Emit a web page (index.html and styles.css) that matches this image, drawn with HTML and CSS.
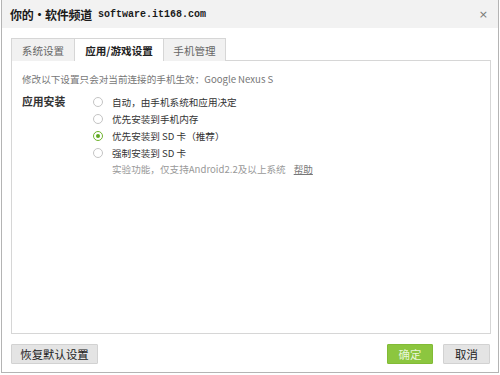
FILE: index.html
```html
<!DOCTYPE html>
<html lang="zh-CN">
<head>
<meta charset="utf-8">
<link rel="stylesheet" href="styles.css">
</head>
<body>
<div class="window">
  <div class="titlebar">
    <span class="wm-cn">你的·软件频道</span>
    <span class="wm-en">software.it168.com</span>
    <span class="close">×</span>
  </div>
  <div class="tabs">
    <div class="tab t1">系统设置</div>
    <div class="tab t2 active">应用/游戏设置</div>
    <div class="tab t3">手机管理</div>
  </div>
  <div class="panel">
    <div class="info">修改以下设置只会对当前连接的手机生效：Google Nexus S</div>
    <div class="setting">
      <div class="setting-label">应用安装</div>
      <div class="options">
        <div class="option"><span class="radio"></span>自动，由手机系统和应用决定</div>
        <div class="option"><span class="radio"></span>优先安装到手机内存</div>
        <div class="option"><span class="radio checked"></span>优先安装到 SD 卡（推荐）</div>
        <div class="option"><span class="radio"></span>强制安装到 SD 卡</div>
        <div class="note">实验功能，仅支持Android2.2及以上系统<a class="help">帮助</a></div>
      </div>
    </div>
  </div>
  <div class="footer">
    <button class="btn">恢复默认设置</button>
    <div class="spacer"></div>
    <button class="btn primary">确定</button>
    <button class="btn cancel">取消</button>
  </div>
</div>
</body>
</html>
```
FILE: styles.css
```css
html, body {
  margin: 0;
  padding: 0;
  background: #ffffff;
}
body {
  font-family: "Noto Sans CJK SC", "Noto Sans", sans-serif;
  color: #333;
}
.window {
  box-sizing: border-box;
  width: 498px;
  height: 373px;
  margin-left: 1px;
  border: 1px solid #b4b4b4;
  border-top: none;
  background: #fff;
  display: flex;
  flex-direction: column;
}
.titlebar {
  height: 28px;
  background: #f2f2f2;
  display: flex;
  align-items: center;
  padding-left: 8px;
  padding-right: 10px;
}
.wm-cn {
  font-size: 12px;
  font-weight: bold;
  color: #1a1a1a;
  letter-spacing: -0.3px;
}
.wm-en {
  font-family: "Liberation Mono", monospace;
  font-size: 10px;
  font-weight: bold;
  color: #1a1a1a;
  margin-left: 6px;
}
.close {
  margin-left: auto;
  font-family: "DejaVu Sans", sans-serif;
  font-size: 11px;
  color: #777;
}
.tabs {
  display: flex;
  margin-top: 10px;
  margin-left: 9px;
  height: 22px;
  position: relative;
  z-index: 1;
}
.tab {
  box-sizing: border-box;
  height: 23px;
  border: 1px solid #d6d6d6;
  border-bottom: none;
  border-right: none;
  background: #f1f1f1;
  color: #666;
  font-size: 10.6px;
  display: flex;
  align-items: center;
  justify-content: center;
}
.t1 { width: 63px; }
.t2 { width: 89px; }
.t3 { width: 63px; border-right: 1px solid #d6d6d6; }
.tab.active {
  background: #fff;
  color: #222;
  font-weight: bold;
}
.panel {
  box-sizing: border-box;
  margin-left: 9px;
  width: 480px;
  height: 274px;
  border: 1px solid #d6d6d6;
  padding: 10px 10px 0 10px;
}
.info {
  font-size: 9.6px;
  line-height: 16px;
  color: #777;
}
.setting {
  display: grid;
  grid-template-columns: 70px 1fr;
  margin-top: 6px;
}
.setting-label {
  font-size: 10.8px;
  font-weight: bold;
  color: #333;
  line-height: 17px;
}
.options {
  display: flex;
  flex-direction: column;
}
.option {
  display: flex;
  align-items: center;
  height: 17px;
  font-size: 9.6px;
  color: #333;
}
.radio {
  box-sizing: border-box;
  width: 10px;
  height: 10px;
  border: 1px solid #c4c4c4;
  border-radius: 50%;
  margin-left: 1px;
  margin-right: 9px;
  background: #fff;
  display: flex;
  align-items: center;
  justify-content: center;
}
.radio.checked {
  border-color: #6fb32e;
}
.radio.checked::after {
  content: "";
  width: 4px;
  height: 4px;
  border-radius: 50%;
  background: #5fa820;
}
.note {
  height: 17px;
  line-height: 17px;
  font-size: 9.6px;
  color: #999;
  padding-left: 20px;
}
.help {
  margin-left: 8px;
  color: #777;
  text-decoration: underline;
}
.footer {
  display: flex;
  align-items: center;
  margin-top: 10px;
  padding-left: 9px;
  padding-right: 8px;
}
.spacer { flex: 1; }
.btn {
  box-sizing: border-box;
  height: 20px;
  padding: 0;
  border: 1px solid #d2d2d2;
  background: #e4e4e4;
  color: #222;
  font-family: "Noto Sans CJK SC", "Noto Sans", sans-serif;
  font-size: 11.4px;
  line-height: 18px;
  border-radius: 1px;
  width: 87px;
}
.btn.primary {
  width: 46px;
  background: #8cc63f;
  border-color: #82bb36;
  color: #e9f6d9;
}
.btn.cancel {
  width: 47px;
  margin-left: 10px;
}
```
